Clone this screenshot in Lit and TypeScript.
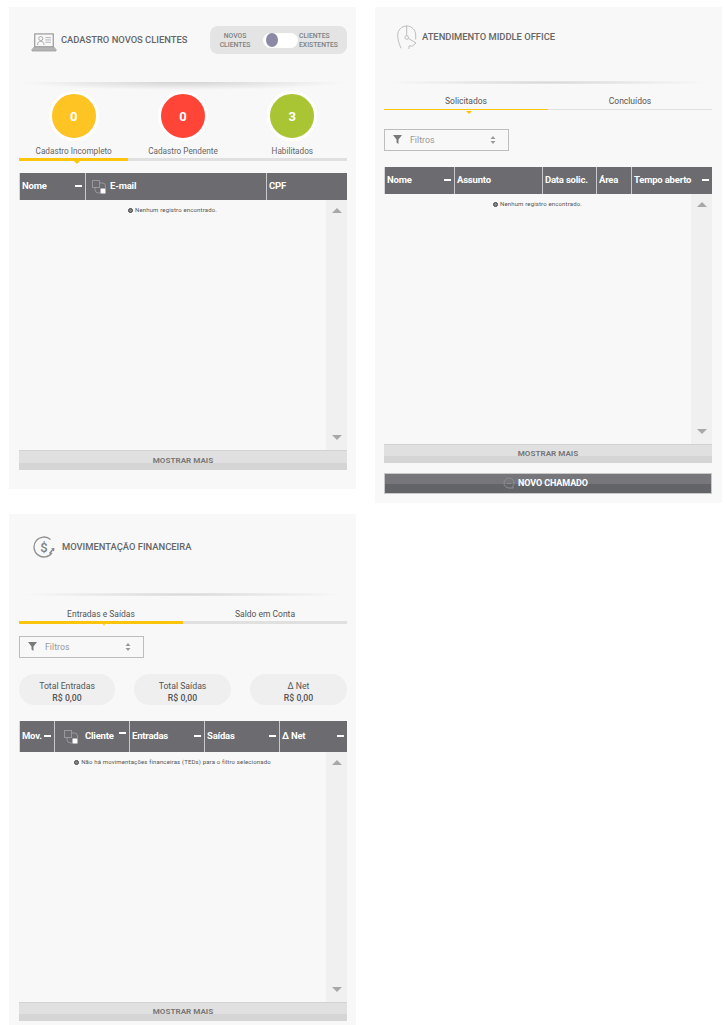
import { LitElement, html, css, svg } from "lit";
import { customElement, property } from "lit/decorators.js";

const FONT = css`Roboto, "Liberation Sans", sans-serif`;

const colIcon = (left: number, right: number) => html`<svg class="col-icon" style="margin-left:${left}px;margin-right:${right}px" width="14" height="14" viewBox="0 0 14 14">
  <rect x="0.5" y="0.5" width="7" height="7" fill="none" stroke="#98989c" />
  <path d="M8 3h2.5a3 3 0 0 1 3 3v2M3 8v1.5a3.5 3.5 0 0 0 3.5 3.5H8" fill="none" stroke="#98989c" />
  <rect x="8.5" y="8.5" width="5" height="5" fill="#fff" />
</svg>`;

type Col = {
  label: string;
  width: string;
  minus?: boolean;
  raised?: boolean;
  iconLeft?: number;
  iconRight?: number;
};

@customElement("data-table")
export class DataTable extends LitElement {
  @property({ type: Array }) cols: Col[] = [];
  @property({ type: String }) message = "";
  @property({ type: Number }) headHeight = 27;
  @property({ type: Number }) moreHeight = 19;

  static styles = css`
    :host {
      display: block;
      font-family: ${FONT};
    }
    .table__head {
      display: grid;
      background: #6b6b70;
      border-left: 1px solid #d5d5d8;
      box-sizing: border-box;
    }
    .table__cell {
      display: flex;
      align-items: center;
      min-width: 0;
      padding: 0 3px 2px 2px;
      box-sizing: border-box;
      border-left: 1px solid #c9c9cc;
      color: #fff;
      font-size: 9.5px;
      font-weight: 700;
      letter-spacing: -0.2px;
      white-space: nowrap;
    }
    .table__cell:first-child {
      border-left: 0;
    }
    .table__minus {
      width: 7px;
      height: 2px;
      margin-left: auto;
      background: #fff;
      flex: none;
    }
    .table__minus--raised {
      margin-top: -6px;
    }
    .col-icon {
      flex: none;
      margin-top: 3px;
    }
    .table__body {
      display: flex;
      height: 250px;
    }
    .table__msg {
      flex: 1;
      padding-top: 6px;
      display: flex;
      justify-content: center;
      align-items: flex-start;
      gap: 2px;
      font-size: 6px;
      line-height: 8px;
      letter-spacing: 0.15px;
      color: #555;
    }
    .table__dot {
      width: 5px;
      height: 5px;
      margin-top: 1.5px;
      border-radius: 50%;
      border: 1.2px solid #444;
      background: #888;
      box-sizing: border-box;
    }
    .table__scroll {
      width: 21px;
      background: #f0f0f0;
      display: flex;
      flex-direction: column;
      justify-content: space-between;
      align-items: center;
      padding: 8px 0 10px;
      box-sizing: border-box;
    }
    .arrow-up,
    .arrow-down {
      width: 0;
      height: 0;
      border-left: 5px solid transparent;
      border-right: 5px solid transparent;
    }
    .arrow-up {
      border-bottom: 5px solid #a8a8a8;
    }
    .arrow-down {
      border-top: 5px solid #a8a8a8;
    }
    .table__more {
      display: flex;
      align-items: center;
      justify-content: center;
      box-sizing: border-box;
      padding-bottom: 2px;
      border-top: 1px solid #d2d2d2;
      background: linear-gradient(#e0e0e0 62%, #d5d5d5 62%);
      color: #777;
      font-size: 8.1px;
      font-weight: 700;
    }
  `;

  render() {
    const template = this.cols.map((c) => c.width).join(" ");
    return html`
      <div class="table__head" style="grid-template-columns:${template};height:${this.headHeight}px">
        ${this.cols.map(
          (c) => html`<div class="table__cell">
            ${c.iconLeft !== undefined ? colIcon(c.iconLeft, c.iconRight ?? 4) : null}<span>${c.label}</span>
            ${c.minus
              ? html`<i class="table__minus ${c.raised ? "table__minus--raised" : ""}"></i>`
              : null}
          </div>`
        )}
      </div>
      <div class="table__body">
        <div class="table__msg"><i class="table__dot"></i><span>${this.message}</span></div>
        <div class="table__scroll"><i class="arrow-up"></i><i class="arrow-down"></i></div>
      </div>
      <div class="table__more" style="height:${this.moreHeight}px">MOSTRAR MAIS</div>
    `;
  }
}

@customElement("tab-bar")
export class TabBar extends LitElement {
  @property({ type: Array }) tabs: string[] = [];
  @property({ type: Boolean, reflect: true }) thin = false;
  @property({ type: Boolean, reflect: true }) plain = false;

  static styles = css`
    :host {
      display: flex;
      font-family: ${FONT};
    }
    .tab {
      flex: 1;
      position: relative;
      text-align: center;
      font-size: 8.5px;
      font-weight: 400;
      line-height: 12px;
      color: #555;
      padding-bottom: 1px;
      border-bottom: 3px solid #e0e0e0;
    }
    .tab--active {
      border-bottom-color: #fcc50d;
    }
    .tab--active::after {
      content: "";
      position: absolute;
      left: calc(50% + 3px);
      bottom: -5px;
      margin-left: -1px;
      border-left: 1px solid transparent;
      border-right: 1px solid transparent;
      border-top: 2px solid #fcc50d;
    }
    :host([thin]) .tab {
      padding-bottom: 2px;
      border-bottom-width: 1.5px;
    }
    :host([thin]) .tab--active::after {
      bottom: -5px;
      margin-left: -3px;
      border-left-width: 3px;
      border-right-width: 3px;
      border-top-width: 3.5px;
    }
    :host([plain]) .tab {
      padding-bottom: 0;
    }
    :host([plain]) .tab--active::after {
      bottom: -6px;
      margin-left: -3px;
      border-left-width: 3px;
      border-right-width: 3px;
      border-top-width: 3px;
    }
  `;

  render() {
    return this.tabs.map(
      (t, i) => html`<div class="tab ${i === 0 ? "tab--active" : ""}">${t}</div>`
    );
  }
}

const icons = {
  laptop: svg`
    <rect x="4" y="1" width="20" height="14" fill="none" stroke="#9a9a9a" stroke-width="1.3" />
    <circle cx="10.5" cy="6" r="2.2" fill="none" stroke="#a5a5a5" />
    <path d="M7 13c0-3 1.5-4 3.5-4s3.5 1 3.5 4" fill="none" stroke="#a5a5a5" />
    <path d="M15.5 5h6M15.5 7.5h6M15.5 10h6" stroke="#b0b0b0" />
    <path d="M1 18l2.5-3h21l2.5 3v1.5H1z" fill="#b5b5b5" stroke="#9a9a9a" stroke-width="0.8" />
  `,
  headset: svg`
    <g fill="none" stroke="#bdbdbd" stroke-width="1">
      <path d="M5 25.3C3 20.3 1.7 17 1.7 12c0-5 4-9 9-9s9 4 9 9v4.5" />
      <path d="M10.7 2.500v10" />
      <circle cx="10.700" cy="14.500" r="1.800" />
      <path d="M12.300 15.300l7.700 4.700-3.500 3H13v3" />
    </g>
  `,
  money: svg`
    <path d="M17.500 3.400A10 10 0 1 0 19 17" fill="none" stroke="#8f8f8f" stroke-width="1.300" />
    <path d="M16.500 17.500l3-3.500" stroke="#7f7f7f" stroke-width="1.200" />
    <path d="M18 12.500l3.500-.5-.5 3.500z" fill="#7f7f7f" />
    <text x="11" y="15.500" text-anchor="middle" font-size="13" font-family="Roboto, sans-serif" font-weight="500" fill="#808080">$</text>
  `,
};

const filterBox = html`<div class="filter">
  <svg width="9" height="9" viewBox="0 0 9 9"><path d="M0 0h9L5.500 4.500V9L3.500 7.500V4.500z" fill="#7a7a7a" /></svg>
  <span class="filter__label">Filtros</span>
  <svg class="filter__sort" width="6" height="8" viewBox="0 0 6 8"><path d="M3 0l2.500 3h-5zM3 8L.5 5h5z" fill="#999" /></svg>
</div>`;

@customElement("app-root")
export class AppRoot extends LitElement {
  static styles = css`
    :host {
      display: block;
      width: 727px;
      height: 1025px;
      overflow: hidden;
      background: #fff;
      font-family: ${FONT};
      color: #666;
    }
    .page {
      display: grid;
      grid-template-columns: 347px 347px;
      column-gap: 19px;
      padding: 7px 0 0 9px;
      align-items: start;
    }
    .col {
      display: flex;
      flex-direction: column;
      gap: 25px;
    }
    .panel {
      background: #f8f8f8;
      padding: 0 9px 0 10px;
      box-sizing: border-box;
    }
    .panel--second {
      padding-left: 9px;
      padding-right: 10px;
    }
    .head {
      display: flex;
      align-items: flex-start;
      box-sizing: border-box;
    }
    .head__title {
      font-size: 9.4px;
      font-weight: 500;
      line-height: 22px;
      color: #666;
      white-space: nowrap;
    }
    .head svg {
      flex: none;
    }
    .toggle {
      margin-left: auto;
      width: 137px;
      height: 28px;
      border-radius: 8px;
      background: #e4e4e4;
      display: flex;
      align-items: center;
      padding-top: 1px;
      box-sizing: border-box;
      font-size: 6.8px;
      line-height: 9px;
      font-weight: 500;
      color: #808080;
    }
    .toggle__left {
      width: 50px;
      text-align: center;
    }
    .toggle__track {
      width: 35px;
      height: 15px;
      margin: -1px 1px 0 3px;
      border-radius: 8px;
      background: #fff;
      display: flex;
      align-items: center;
      padding-left: 3px;
      box-sizing: border-box;
    }
    .toggle__knob {
      width: 12px;
      height: 14px;
      border-radius: 50%;
      background: #8a8aa6;
    }
    .divider {
      height: 3px;
      background: radial-gradient(ellipse 50% 100% at 50% 50%, rgba(0, 0, 0, 0.13), transparent);
    }
    .divider--big {
      height: 8px;
      background: radial-gradient(ellipse 50% 100% at 50% 0, rgba(0, 0, 0, 0.15), transparent);
    }
    .stats {
      display: grid;
      grid-template-columns: repeat(3, 1fr);
      margin-top: 1px;
    }
    .stat {
      display: flex;
      flex-direction: column;
      align-items: center;
    }
    .stat__circle {
      width: 50px;
      height: 50px;
      box-sizing: border-box;
      border: 3px solid #fff;
      border-radius: 50%;
      display: flex;
      align-items: center;
      justify-content: center;
      color: #fff;
      font-size: 13px;
      font-weight: 700;
    }
    .stat__label {
      margin-top: 4px;
      font-size: 8.2px;
      line-height: 12px;
      color: #666;
      white-space: nowrap;
    }
    .filter {
      width: 125px;
      height: 22px;
      box-sizing: border-box;
      border: 1px solid #bdbdbd;
      display: flex;
      align-items: center;
      padding: 0 12px 1px 8px;
      font-size: 8.8px;
      color: #999;
    }
    .filter__label {
      margin-left: 8px;
    }
    .filter__sort {
      margin-left: auto;
    }
    .pills {
      display: grid;
      grid-template-columns: 96px 97px 97px;
      justify-content: space-between;
      margin-top: 16px;
    }
    .pill {
      height: 31px;
      box-sizing: border-box;
      padding-top: 5px;
      border-radius: 16px;
      background: #efefef;
      display: flex;
      flex-direction: column;
      align-items: center;
      justify-content: center;
      font-size: 8.7px;
      line-height: 12px;
      color: #555;
    }
    .pill__value {
      font-weight: 500;
    }
    .btn {
      margin-top: 10px;
      height: 21px;
      box-sizing: border-box;
      border: 1px solid #c8c8c8;
      padding: 0 5px 2px 0;
      background: linear-gradient(#77777b 55%, #636467 55%);
      display: flex;
      align-items: center;
      justify-content: center;
      gap: 3px;
      color: #fff;
      font-size: 9px;
      font-weight: 700;
      letter-spacing: -0.1px;
    }
  `;

  render() {
    return html`
      <div class="page">
        <div class="col">
          <section class="panel" style="height:482px">
            <div class="head" style="height:75px;padding-top:19px">
              <svg width="26" height="18.500" viewBox="0 0 28 20" style="margin:7px 4px 0 12px">${icons.laptop}</svg>
              <div class="head__title" style="line-height:28px">CADASTRO NOVOS CLIENTES</div>
              <div class="toggle">
                <div class="toggle__left">NOVOS<br />CLIENTES</div>
                <div class="toggle__track"><div class="toggle__knob"></div></div>
                <div>CLIENTES<br />EXISTENTES</div>
              </div>
            </div>
            <div class="divider divider--big"></div>
            <div class="stats">
              ${[
                ["0", "#fec424", "Cadastro Incompleto"],
                ["0", "#fe4538", "Cadastro Pendente"],
                ["3", "#a9c534", "Habilitados"],
              ].map(
                ([n, color, label]) => html`<div class="stat">
                  <div class="stat__circle" style="background:${color}">${n}</div>
                  <div class="stat__label">${label}</div>
                </div>`
              )}
            </div>
            <tab-bar plain .tabs=${["", "", ""]} style="margin-top:1px"></tab-bar>
            <data-table
              style="margin-top:12px"
              .moreHeight=${20}
              .cols=${[
                { label: "Nome", width: "65px", minus: true },
                { label: "E-mail", width: "181px", iconLeft: 4 },
                { label: "CPF", width: "1fr" },
              ]}
              message="Nenhum registro encontrado."
            ></data-table>
          </section>

          <section class="panel">
            <div class="head" style="height:79px;padding-top:22px">
              <svg width="24" height="24" viewBox="0 0 24 24" style="margin:0 5px 0 14px">${icons.money}</svg>
              <div class="head__title">MOVIMENTAÇÃO FINANCEIRA</div>
            </div>
            <div class="divider"></div>
            <tab-bar .tabs=${["Entradas e Saídas", "Saldo em Conta"]} style="margin-top:12px"></tab-bar>
            <div style="margin-top:12px">${filterBox}</div>
            <div class="pills">
              ${[
                ["Total Entradas", "R$ 0,00"],
                ["Total Saídas", "R$ 0,00"],
                ["Δ Net", "R$ 0,00"],
              ].map(
                ([label, value]) => html`<div class="pill">
                  <span>${label}</span><span class="pill__value">${value}</span>
                </div>`
              )}
            </div>
            <data-table
              style="margin:16px 0 4px"
              .headHeight=${31}
              .cols=${[
                { label: "Mov.", width: "34px", minus: true },
                { label: "Cliente", width: "75px", minus: true, raised: true, iconLeft: 7, iconRight: 7 },
                { label: "Entradas", width: "75px", minus: true },
                { label: "Saídas", width: "75px", minus: true },
                { label: "Δ Net", width: "1fr", minus: true },
              ]}
              message="Não há movimentações financeiras (TEDs) para o filtro selecionado"
            ></data-table>
          </section>
        </div>

        <section class="panel panel--second">
          <div class="head" style="height:74px;padding-top:16px">
            <svg width="24" height="28" viewBox="0 0 24 28" style="margin:0 2px 0 12px">${icons.headset}</svg>
            <div class="head__title" style="margin-top:3px">ATENDIMENTO MIDDLE OFFICE</div>
          </div>
          <div class="divider"></div>
          <tab-bar thin .tabs=${["Solicitados", "Concluídos"]} style="margin-top:11px"></tab-bar>
          <div style="margin-top:19px">${filterBox}</div>
          <data-table
            style="margin-top:16px"
            .cols=${[
              { label: "Nome", width: "69px", minus: true },
              { label: "Assunto", width: "88px" },
              { label: "Data solic.", width: "54px" },
              { label: "Área", width: "35px" },
              { label: "Tempo aberto", width: "1fr", minus: true },
            ]}
            message="Nenhum registro encontrado."
          ></data-table>
          <div class="btn">
            <svg width="12" height="12" viewBox="0 0 12 12">
              <path d="M6 1a5 5 0 1 0 0 10h4.500l-.8-1.500A5 5 0 0 0 6 1z" fill="none" stroke="#8d8d90" />
              <path d="M4 6.500h4" stroke="#8d8d90" />
            </svg>
            NOVO CHAMADO
          </div>
          <div style="height:9px"></div>
        </section>
      </div>
    `;
  }
}
